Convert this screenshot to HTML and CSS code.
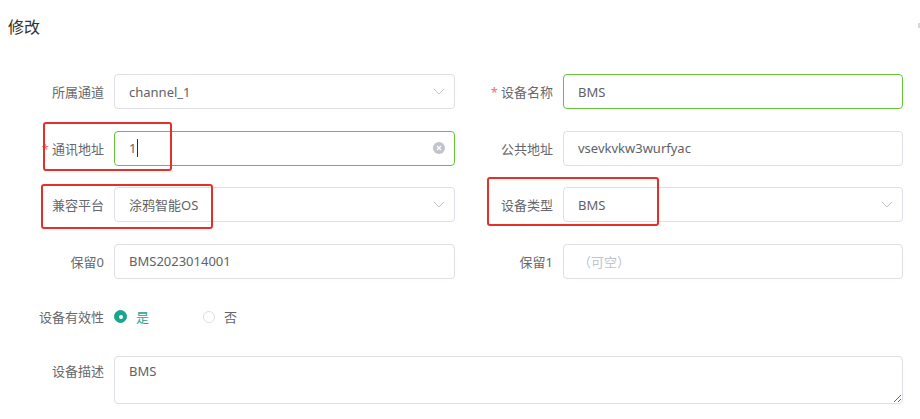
FILE: index.html
```html
<!DOCTYPE html>
<html lang="zh-CN">
<head>
<meta charset="utf-8">
<title>修改</title>
<link rel="stylesheet" href="styles.css">
</head>
<body>
<div class="dialog">
  <div class="header">修改</div>
  <span class="corner-mark"></span>
  <div class="form">
    <div class="grid">
      <div class="item">
        <label class="label">所属通道</label>
        <div class="field select"><span class="value">channel_1</span>
          <svg class="chev" viewBox="0 0 12 7" width="12" height="7"><path d="M1 1 L6 6 L11 1" fill="none" stroke="#c0c4cc" stroke-width="1"/></svg>
        </div>
      </div>
      <div class="item">
        <label class="label"><span class="req">*</span>设备名称</label>
        <div class="field ok"><span class="value">BMS</span></div>
      </div>
      <div class="item">
        <label class="label"><span class="req">*</span>通讯地址</label>
        <div class="field ok"><span class="value">1</span><span class="caret"></span>
          <svg class="clear" viewBox="0 0 12 12" width="12" height="12"><circle cx="6" cy="6" r="6" fill="#c0c4cc"/><path d="M4 4 L8 8 M8 4 L4 8" stroke="#fff" stroke-width="1.2"/></svg>
        </div>
      </div>
      <div class="item">
        <label class="label">公共地址</label>
        <div class="field"><span class="value">vsevkvkw3wurfyac</span></div>
      </div>
      <div class="item">
        <label class="label">兼容平台</label>
        <div class="field select"><span class="value">涂鸦智能OS</span>
          <svg class="chev" viewBox="0 0 12 7" width="12" height="7"><path d="M1 1 L6 6 L11 1" fill="none" stroke="#c0c4cc" stroke-width="1"/></svg>
        </div>
      </div>
      <div class="item">
        <label class="label">设备类型</label>
        <div class="field select"><span class="value">BMS</span>
          <svg class="chev" viewBox="0 0 12 7" width="12" height="7"><path d="M1 1 L6 6 L11 1" fill="none" stroke="#c0c4cc" stroke-width="1"/></svg>
        </div>
      </div>
      <div class="item">
        <label class="label">保留0</label>
        <div class="field"><span class="value">BMS2023014001</span></div>
      </div>
      <div class="item">
        <label class="label">保留1</label>
        <div class="field"><span class="placeholder">（可空）</span></div>
      </div>
    </div>

    <div class="item radio-row">
      <label class="label">设备有效性</label>
      <div class="radios">
        <span class="radio checked"><span class="dot"></span><span class="rtext">是</span></span>
        <span class="radio plain"><span class="dot"></span><span class="rtext">否</span></span>
      </div>
    </div>

    <div class="item area-row">
      <label class="label">设备描述</label>
      <textarea class="area" rows="2" readonly>BMS</textarea>
    </div>
  </div>

  <span class="mark mark1"></span>
  <span class="mark mark2"></span>
  <span class="mark mark3"></span>
</div>
</body>
</html>
```

FILE: styles.css
```css
* { box-sizing: border-box; }
html, body {
  margin: 0;
  background: #fff;
}
body {
  font-family: "Noto Sans", "Noto Sans CJK SC", sans-serif;
  font-size: 13px;
  color: #606266;
}
.dialog {
  position: relative;
  width: 920px;
  height: 419px;
  overflow: hidden;
}
.header {
  height: 54px;
  line-height: 54px;
  padding-left: 8px;
  font-size: 16px;
  color: #303133;
}
.corner-mark {
  position: absolute;
  right: 0;
  top: 23px;
  width: 2px;
  height: 5px;
  background: #d8d8d8;
}
.form {
  padding: 20px 17px 0 14px;
}
.grid {
  display: grid;
  grid-template-columns: 441px 440px;
  column-gap: 8px;
  row-gap: 21.5px;
}
.item {
  display: flex;
  align-items: center;
}
.label {
  flex: 0 0 100px;
  width: 100px;
  text-align: right;
  padding-right: 10px;
  font-size: 13px;
  color: #66686d;
  white-space: nowrap;
}
.req {
  color: #f56c6c;
  margin-right: 3px;
}
.field {
  flex: 1;
  height: 35px;
  border: 1px solid #dcdfe6;
  border-radius: 4px;
  padding: 0 14px;
  display: flex;
  align-items: center;
  font-size: 13px;
  color: #606266;
}
.field.ok {
  border-color: #67c23a;
}
.value {
  white-space: nowrap;
}
.placeholder {
  color: #c0c4cc;
}
.caret {
  display: inline-block;
  width: 1px;
  height: 18px;
  background: #303133;
  margin-left: 1px;
}
.chev {
  margin-left: auto;
  margin-right: -5px;
}
.clear {
  margin-left: auto;
  margin-right: -5px;
}
.radio-row {
  margin-top: 20.5px;
  height: 35px;
}
.radios {
  display: flex;
  align-items: center;
}
.radio {
  display: flex;
  align-items: center;
}
.radio .dot {
  width: 13px;
  height: 13px;
  border-radius: 50%;
  border: 1px solid #dcdfe6;
  background: #fff;
  position: relative;
  display: inline-block;
}
.radio.checked {
  width: 89px;
}
.radio.checked .dot {
  background: #1aa590;
  border-color: #1aa590;
}
.radio.checked .dot::after {
  content: "";
  position: absolute;
  left: 50%;
  top: 50%;
  width: 4px;
  height: 4px;
  margin: -2px 0 0 -2px;
  border-radius: 50%;
  background: #fff;
}
.rtext {
  margin-left: 9px;
  color: #606266;
}
.radio.checked .rtext {
  color: #1aa590;
}
.radio.plain .dot {
  width: 12px;
  height: 12px;
}
.radio.plain .rtext {
  margin-left: 9px;
}
.area-row {
  margin-top: 22px;
  align-items: flex-start;
}
.area-row .label {
  padding-top: 6px;
  line-height: 19.5px;
}
.area {
  flex: 1;
  height: 48px;
  border: 1px solid #dcdfe6;
  border-radius: 4px;
  padding: 5px 14px;
  font-family: "Noto Sans", "Noto Sans CJK SC", sans-serif;
  font-size: 13px;
  line-height: 19.5px;
  color: #606266;
  resize: vertical;
  outline: none;
}
.mark {
  position: absolute;
  border: 2px solid #e5302a;
  border-radius: 3px;
  pointer-events: none;
}
.mark1 { left: 43px; top: 122px; width: 129px; height: 49px; }
.mark2 { left: 41px; top: 184px; width: 172px; height: 45px; }
.mark3 { left: 487px; top: 177px; width: 172px; height: 49px; }
```
